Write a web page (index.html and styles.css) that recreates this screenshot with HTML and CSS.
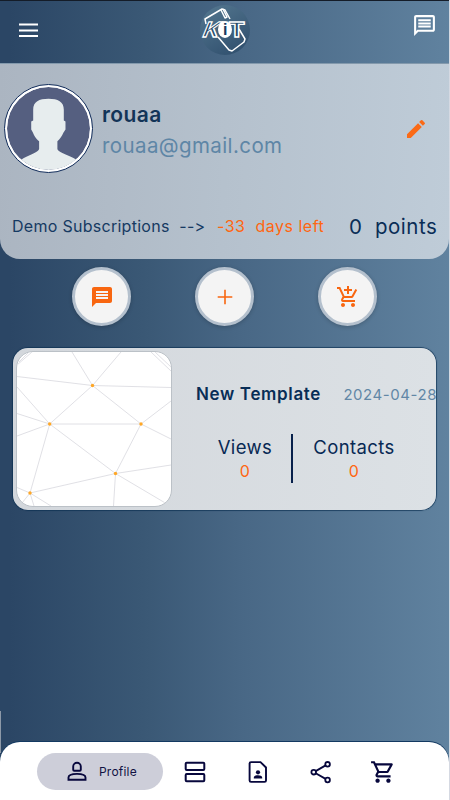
FILE: index.html
```html
<!DOCTYPE html>
<html lang="en">
<head>
<meta charset="utf-8">
<meta name="viewport" content="width=device-width, initial-scale=1">
<title>KiT Profile</title>
<link rel="stylesheet" href="styles.css">
</head>
<body>
<div class="app">
  <header class="topbar">
    <svg class="menu" viewBox="0 0 24 24"><path d="M2.500 6.500h19M2.500 12.500h19M2.500 18h19" fill="none" stroke="#fff" stroke-width="2"/></svg>
    <div class="logo">
      <svg class="logo-art" viewBox="0 0 50 50">
        <g fill="none" stroke="#fff" stroke-width="1.500" stroke-linejoin="round">
          <path d="M6 19l-1-5 17-10 3 1 5 9"/>
          <path d="M21 5l4 8 2-1-4-8M39 24l6 10-1 3-12 9-3-1-11-13"/>
        </g>
      </svg>
      <div class="logo-text"><span class="k">K</span><span class="i">i</span><span class="t">T</span></div>
    </div>
    <svg class="chat" viewBox="0 0 24 24" fill="#fff"><path d="M4 4h16v12H5.170L4 17.170V4m0-2c-1.100 0-1.990.9-1.990 2L2 22l4-4h14c1.100 0 2-.9 2-2V4c0-1.100-.9-2-2-2H4zm2 10h12v2H6v-2zm0-3h12v2H6V9zm0-3h12v2H6V6z"/></svg>
  </header>

  <section class="profile">
    <div class="identity">
      <div class="avatar">
        <svg viewBox="0 0 84 84"><circle cx="42" cy="42" r="42" fill="#555f80"/><path d="M26.500 23c0-8 6-11 15.500-11s15.500 3 15.500 11v11l1.700 1v8l-2 3c-2 4-3 6-6.200 9v8c2 4 14 7 19 10.500A42 42 0 0 1 14.500 73.500c5-3.500 16-6.500 18-10.500v-8c-3.500-3-4.500-5-6.300-9l-1.700-3v-8l2-1z" fill="#e7edee"/></svg>
      </div>
      <div class="who"><div class="name">rouaa</div><div class="email">rouaa@gmail.com</div></div>
      <svg class="edit" viewBox="0 0 24 24" fill="#fb6a16"><path d="M3 17.250V21h3.750L17.810 9.940l-3.750-3.750L3 17.250zM20.710 7.040a1 1 0 0 0 0-1.410l-2.340-2.340a1 1 0 0 0-1.410 0l-1.830 1.830 3.750 3.750 1.830-1.830z"/></svg>
    </div>
    <div class="plan">
      <span class="plan-name">Demo Subscriptions&nbsp; --&gt;</span>
      <span class="days">-33&nbsp; days left</span>
      <span class="points">0&nbsp; points</span>
    </div>
  </section>

  <div class="actions">
    <div class="action"><svg viewBox="0 0 24 24"><path d="M20 2H4c-1.100 0-1.990.9-1.990 2L2 22l4-4h14c1.100 0 2-.9 2-2V4c0-1.100-.9-2-2-2zm-2 12H6v-2h12v2zm0-3H6V9h12v2zm0-3H6V6h12v2z"/></svg></div>
    <div class="action"><svg viewBox="0 0 24 24"><path d="M19.300 12.800h-6.500v6.500h-1.600v-6.500H4.700v-1.600h6.500V4.700h1.600v6.500h6.500z"/></svg></div>
    <div class="action"><svg viewBox="0 0 24 24"><path d="M11 9h2V6h3V4h-3V1h-2v3H8v2h3v3zm-4 9c-1.100 0-1.990.9-1.990 2S5.900 22 7 22s2-.9 2-2-.9-2-2-2zm10 0c-1.100 0-1.990.9-1.990 2s.89 2 1.990 2 2-.9 2-2-.9-2-2-2zm-8.900-5h7.450c.75 0 1.410-.41 1.750-1.030L21.160 4.960 19.420 4h-.01l-1.100 2-2.760 5H8.530l-.13-.27L6.160 6l-.95-2-.94-2H1v2h2l3.600 7.590-1.350 2.450C4.520 15.370 5.480 17 7 17h12v-2H7l1.100-2z"/></svg></div>
  </div>

  <article class="card">
    <div class="thumb">
      <svg viewBox="0 0 154 154">
        <path d="M0 24.500L75.500 33.500L154 35.500M55 0L75.500 33.500L104 0M75.500 33.500L32.700 72L0 35M75.500 33.500L124 72L154 49M32.700 72H124L154 87M32.700 72L0 61.500M32.700 72L0 84M32.700 72L98.500 121.500L124 72M32.700 72L13 141L98.500 121.500L154 113M98.500 121.500L96.500 154M98.500 121.500L150 152M13 141L0 135.500M13 141L5 151M13 141L17 154M13 141L34 154M0 13L15 0M2 10L12 0M134 0L154 19M138 0L154 15" fill="none" stroke="#dcdde2" stroke-width=".9"/>
        <g fill="#ffa726"><circle cx="75.500" cy="33.500" r="1.700"/><circle cx="32.700" cy="72" r="1.700"/><circle cx="124" cy="72" r="1.700"/><circle cx="98.500" cy="121.500" r="1.700"/><circle cx="13" cy="141" r="1.700"/></g>
      </svg>
    </div>
    <div class="details">
      <div class="heading"><span class="title">New Template</span><span class="date">2024-04-28</span></div>
      <div class="stats">
        <div class="stat views"><span>Views</span><b>0</b></div>
        <div class="stat contacts"><span>Contacts</span><b>0</b></div>
      </div>
    </div>
  </article>

  <nav class="nav">
    <div class="tab active">
      <svg viewBox="0 0 24 24" fill="none" stroke="#07073c" stroke-width="1.900"><path d="M8.200 10.800V7.600a3.800 3.800 0 0 1 7.600 0v3.200q0 1-1 1H9.200q-1 0-1-1zM3.500 20.800v-2.300c0-4.800 17-4.800 17 0v2.300z"/></svg>
      <span>Profile</span>
    </div>
    <div class="tab-icons">
      <svg class="tab-icon" viewBox="0 0 24 24" fill="none" stroke="#07073c" stroke-width="2"><rect x="2.700" y="2.800" width="18.600" height="7.200" rx="1"/><rect x="2.700" y="14" width="18.600" height="7.200" rx="1"/></svg>
      <svg class="tab-icon" viewBox="0 0 24 24" fill="none" stroke="#07073c" stroke-width="1.900"><path d="M5 2.100h9.500l5.500 5.400v13q0 1.400-1.400 1.400H5q-1.400 0-1.400-1.400v-17Q3.600 2.100 5 2.100z"/><g fill="#07073c" stroke="none"><circle cx="12" cy="12.300" r="2.100"/><path d="M7.800 18.500v-1c0-3 8.400-3 8.400 0v1z"/></g></svg>
      <svg class="tab-icon share" viewBox="0 0 24 24" fill="none" stroke="#07073c" stroke-width="1.800"><circle cx="18.600" cy="4.300" r="2.300"/><circle cx="4.700" cy="12.200" r="2.300"/><circle cx="18.600" cy="20" r="2.300"/><path d="M6.700 11.100l9.900-5.700M6.700 13.300l9.900 5.600"/></svg>
      <svg class="tab-icon cart" viewBox="0 0 24 24" fill="#07073c"><path d="M15.550 13c.75 0 1.410-.41 1.750-1.030l3.580-6.490A.996.996 0 0 0 20.010 4H5.210l-.94-2H1v2h2l3.600 7.590-1.350 2.440C4.520 15.370 5.480 17 7 17h12v-2H7l1.100-2h7.450zM6.160 6h12.150l-2.760 5H8.530L6.160 6zM7 18c-1.100 0-1.990.9-1.990 2S5.900 22 7 22s2-.9 2-2-.9-2-2-2zm10 0c-1.100 0-1.990.9-1.990 2s.89 2 1.990 2 2-.9 2-2-.9-2-2-2z"/></svg>
    </div>
  </nav>
</div>
</body>
</html>
```
FILE: styles.css
```css
* { box-sizing: border-box; }
body { margin: 0; background: #d5d9e2; font-family: Inter, "Liberation Sans", sans-serif; }
svg { display: block; flex-shrink: 0; }
.app {
  width: 449px;
  height: 800px;
  display: flex;
  flex-direction: column;
  overflow: hidden;
  background: linear-gradient(90deg, #2b4665 2%, #3a5875 32%, #486785 53%, #60829f 100%);
}
.topbar {
  height: 63px;
  border-top: 1px solid #141c28;
  display: flex;
  justify-content: space-between;
  padding: 0 12px 0 16px;
}
.menu { width: 25px; height: 24px; margin-top: 17px; }
.logo {
  width: 50px;
  height: 50px;
  margin: 4px 13px 0 10px;
  border-radius: 50%;
  background: linear-gradient(150deg, #557890, #2d4c6b);
  display: grid;
}
.logo-art, .logo-text { grid-area: 1 / 1; }
.logo-art { width: 50px; height: 50px; }
.logo-text {
  display: flex;
  align-items: center;
  justify-content: center;
  height: 49px;
  padding-right: 2px;
  color: #244767;
  font: 700 22px/22px "Liberation Sans", sans-serif;
  -webkit-text-stroke: 1.3px #fff;
}
.logo-text .k { transform: skewX(-22deg); }
.logo-text .t { transform: scaleX(1.15); }
.logo-text .i {
  width: 14px;
  height: 17px;
  margin: 0 -2px;
  border-radius: 50%;
  background: #fff;
  color: #173b60;
  font-size: 16px;
  line-height: 17px;
  text-align: center;
  -webkit-text-stroke: 0;
  z-index: 1;
}
.chat { width: 25px; height: 25px; margin-top: 12px; }
.profile {
  height: 196px;
  border-radius: 0 0 20px 20px;
  border-top: 1px solid #8399ac;
  background: linear-gradient(92deg, #abb5c1, #b5c1cd 50%, #bfccd8);
  display: flex;
  flex-direction: column;
}
.identity { display: flex; padding: 20px 21px 0 4px; }
.avatar {
  width: 89px;
  height: 89px;
  padding: 2px;
  border: 1px solid #102b59;
  border-radius: 50%;
  background: #fff;
}
.avatar svg { width: 83px; height: 83px; border-radius: 50%; }
.who { flex: 1; padding: 17px 0 0 9px; white-space: nowrap; }
.name { font-size: 21px; line-height: 28px; font-weight: 600; letter-spacing: .4px; color: #123458; }
.email { margin-top: 3px; font-size: 20.5px; line-height: 28px; letter-spacing: .4px; color: #5e86a6; }
.edit { width: 24px; height: 24px; margin-top: 33px; }
.plan { display: flex; align-items: center; height: 30px; margin-top: 38px; padding-left: 12px; white-space: pre; }
.plan-name { width: 205px; font-size: 16px; letter-spacing: .28px; color: #163a62; }
.days { width: 132px; font-size: 16px; letter-spacing: .5px; color: #ff6611; }
.points { font-size: 20.5px; letter-spacing: .5px; color: #092d56; }
.actions { display: flex; justify-content: space-between; padding: 8px 72px 0; }
.action {
  width: 59px;
  height: 59px;
  border: 3px solid #b4c0cd;
  border-radius: 50%;
  background: #f4f4f4;
  box-shadow: 0 1px 4px #0003;
  display: grid;
  place-items: center;
}
.action svg { width: 24px; height: 24px; fill: #f86610; }
.card {
  width: 423px;
  height: 162.5px;
  margin: 21.5px 0 0 12.5px;
  border-radius: 15px;
  background: linear-gradient(90deg, #d3d7dc, #dce1e5);
  box-shadow: 0 0 0 .5px #0b2e50, 0 0 2px #0b2e50;
  display: flex;
  padding: 3.5px 0 0 3.5px;
}
.thumb { width: 156px; height: 156px; border: 1px solid #bbc1c7; border-radius: 17px; background: #fff; overflow: hidden; flex-shrink: 0; }
.thumb svg { width: 154px; height: 154px; }
.details { width: 265px; flex-shrink: 0; padding: 31px 0 0 24px; }
.heading { display: flex; align-items: center; justify-content: space-between; height: 24px; white-space: nowrap; }
.title { font-size: 17px; font-weight: 600; letter-spacing: .65px; color: #082d56; }
.date { font-size: 15px; letter-spacing: .55px; color: #6287a6; }
.stats { display: flex; margin-top: 28px; height: 49px; }
.stat { display: flex; flex-direction: column; align-items: center; font-size: 18.500px; line-height: 26px; letter-spacing: .4px; color: #082954; }
.stat b { font-size: 16px; line-height: 22px; font-weight: 400; color: #ff6611; }
.views { width: 97px; padding-left: 3px; border-right: 2px solid #07204b; }
.contacts { width: 122px; }
.nav {
  height: 58px;
  margin-top: auto;
  border-radius: 20px 20px 0 0;
  background: #fff;
  box-shadow: 0 -1px 0 #133961;
  position: relative;
  display: flex;
  align-items: center;
  gap: 20px;
  padding-left: 37px;
}
.nav::before {
  content: "";
  position: absolute;
  left: 0;
  top: -31px;
  width: 1px;
  height: 42px;
  background: #8d99a8;
}
.tab { width: 126px; height: 37px; border-radius: 19px; background: #cdced9; display: flex; align-items: center; padding-left: 28px; gap: 10px; }
.tab svg { width: 24px; height: 24px; }
.tab span { font-size: 12px; letter-spacing: .2px; color: #111343; }
.tab-icons { display: flex; align-items: center; gap: 38.5px; }
.tab-icon { width: 24px; height: 24px; margin-top: 1px; }
.tab-icon.share { margin: 1px -1px 0 1px; }
.tab-icon.cart { width: 26px; height: 26px; margin-left: -1px; }
```
